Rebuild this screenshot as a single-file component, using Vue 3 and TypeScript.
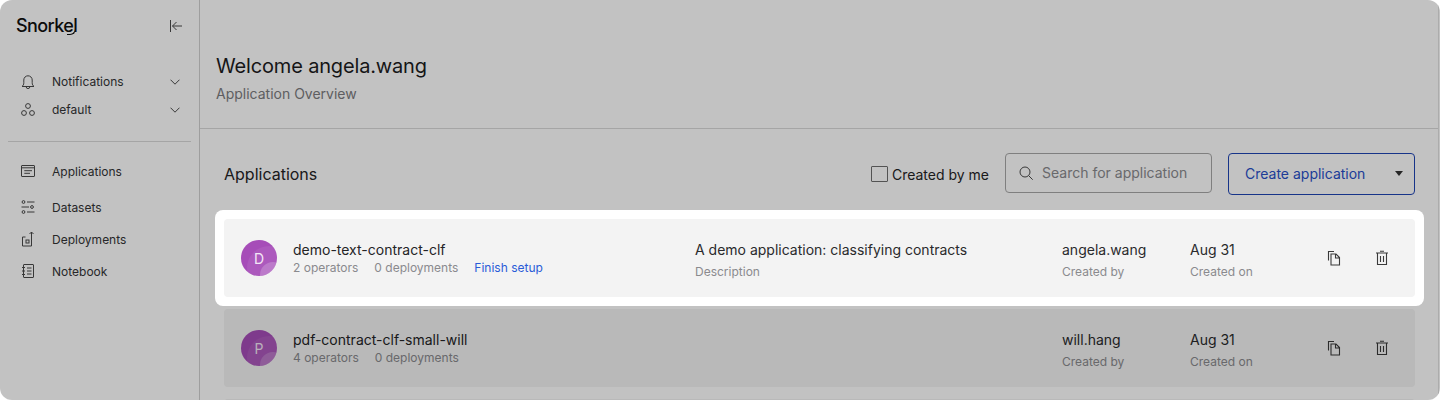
<script setup lang="ts">
interface AppRow {
  name: string;
  initial: string;
  operators: number;
  deployments: number;
  finishSetup?: boolean;
  description?: string;
  owner: string;
  created: string;
}

const topNav = ["Notifications", "default"];

const rows: AppRow[] = [
  {
    name: "demo-text-contract-clf",
    initial: "D",
    operators: 2,
    deployments: 0,
    finishSetup: true,
    description: "A demo application: classifying contracts",
    owner: "angela.wang",
    created: "Aug 31",
  },
  {
    name: "pdf-contract-clf-small-will",
    initial: "P",
    operators: 4,
    deployments: 0,
    owner: "will.hang",
    created: "Aug 31",
  },
];
</script>

<template>
  <div class="shell">
    <aside class="side">
      <div class="side__top">
        <div class="logo">Snorke<span class="logo__l">l</span></div>
        <svg class="collapse" width="16" height="16" viewBox="0 0 16 16" fill="none" stroke="#4a4a4a" stroke-width="1">
          <path d="M3.500 2v12M15 8H5.500M9.500 4l-4 4 4 4" />
        </svg>
      </div>

      <nav class="side__group side__group--top">
        <div v-for="(item, i) in topNav" :key="item" class="nav nav--top">
          <svg v-if="i === 0" class="nav__icon" width="16" height="16" viewBox="0 0 16 16" fill="none" stroke="#4a4a4a">
            <path d="M2 12.500c1.300-1 1.800-2 1.800-3.800V6a4.200 4.200 0 0 1 8.400 0v2.700c0 1.800.5 2.800 1.800 3.800z" />
            <path d="M6.200 12.800a1.800 1.800 0 0 0 3.600 0" />
          </svg>
          <svg v-else class="nav__icon" width="16" height="16" viewBox="0 0 16 16" fill="none" stroke="#4a4a4a">
            <circle cx="8" cy="4" r="2.400" />
            <circle cx="4" cy="11" r="2.400" />
            <circle cx="12" cy="11" r="2.400" />
          </svg>
          <span class="nav__label">{{ item }}</span>
          <svg class="nav__chevron" width="10" height="6" viewBox="0 0 10 6" fill="none" stroke="#4a4a4a">
            <path d="M.5.700 5 5.200 9.500.7" />
          </svg>
        </div>
      </nav>

      <div class="side__rule"></div>

      <nav class="side__group">
        <div class="nav nav--apps">
          <svg class="nav__icon" width="16" height="16" viewBox="0 0 16 16" fill="none" stroke="#4a4a4a">
            <rect x="1.500" y="2.500" width="13" height="11" rx=".5" />
            <path d="M1.500 4.800h13M4.300 7.700H12M4.300 10.300H10" />
          </svg>
          <span class="nav__label">Applications</span>
        </div>
        <div class="nav nav--datasets">
          <svg class="nav__icon" width="16" height="16" viewBox="0 0 16 16" fill="none" stroke="#4a4a4a">
            <circle cx="3.500" cy="3" r="1.400" />
            <circle cx="12" cy="8" r="1.400" />
            <circle cx="3.500" cy="13" r="1.400" />
            <path d="M7 3h7.500M1.500 8H9M7 13h7.500" />
          </svg>
          <span class="nav__label">Datasets</span>
        </div>
        <div class="nav nav--deploy">
          <svg class="nav__icon" width="16" height="16" viewBox="0 0 16 16" fill="none" stroke="#4a4a4a">
            <path d="M5.500 6h-3v9h9V1M9.500 3l2-2 2 2" />
            <rect x="6" y="9" width="3" height="3" />
          </svg>
          <span class="nav__label">Deployments</span>
        </div>
        <div class="nav">
          <svg class="nav__icon" width="16" height="16" viewBox="0 0 16 16" fill="none" stroke="#4a4a4a">
            <rect x="3.500" y="1.500" width="10" height="13" rx=".5" />
            <path d="M2 4.500h3M2 8h3M2 11.500h3M7 5h4.500M7 8h4.500M7 11h4.500" />
          </svg>
          <span class="nav__label">Notebook</span>
        </div>
      </nav>
    </aside>

    <main class="main">
      <header class="head">
        <h1 class="head__title">Welcome angela.wang</h1>
        <p class="head__sub">Application Overview</p>
      </header>

      <section class="apps">
        <div class="toolbar">
          <h2 class="toolbar__title">Applications</h2>
          <label class="check"><span class="check__box"></span>Created by me</label>
          <div class="search">
            <svg width="16" height="16" viewBox="0 0 16 16" fill="none" stroke="#4a4a4a">
              <circle cx="7" cy="7" r="5" />
              <path d="m10.700 10.700 4 4" />
            </svg>
            <span>Search for application</span>
          </div>
          <button class="create" type="button">
            <span>Create application</span>
            <span class="create__caret"></span>
          </button>
        </div>

        <div class="list">
          <div v-for="(row, i) in rows" :key="row.name" :class="{ spotlight: i === 0 }">
            <article class="row">
              <div class="avatar">{{ row.initial }}</div>
              <div class="row__name">
                <div class="row__title">{{ row.name }}</div>
                <div class="row__meta">
                  <span>{{ row.operators }} operators</span>
                  <span>{{ row.deployments }} deployments</span>
                  <a v-if="row.finishSetup" class="row__link">Finish setup</a>
                </div>
              </div>
              <div class="cell">
                <template v-if="row.description">
                  <div class="cell__value">{{ row.description }}</div>
                  <div class="cell__label">Description</div>
                </template>
              </div>
              <div class="cell">
                <div class="cell__value">{{ row.owner }}</div>
                <div class="cell__label">Created by</div>
              </div>
              <div class="cell">
                <div class="cell__value">{{ row.created }}</div>
                <div class="cell__label">Created on</div>
              </div>
              <div class="row__actions">
                <svg width="16" height="16" viewBox="0 0 16 16" fill="none" stroke="#3a3a3a" stroke-width="1.100">
                  <path d="M2.500 10.500V1.500H8" />
                  <path d="M5 4h5l3.500 3.500V15H5zM9.500 4v4h4" />
                </svg>
                <svg width="16" height="16" viewBox="0 0 16 16" fill="none" stroke="#3a3a3a" stroke-width="1.100">
                  <path d="M2 3h12M6 1.200h4M3.500 3v11.500h9V3M6.500 6v6M9.500 6v6" />
                </svg>
              </div>
            </article>
          </div>
          <div class="row row--next"></div>
        </div>
      </section>
    </main>
  </div>
</template>

<style>
html,
body {
  margin: 0;
  background: #fff;
}
</style>

<style scoped>
.shell {
  display: flex;
  height: 400px;
  width: 1440px;
  overflow: hidden;
  border-radius: 12px;
  background: #fff;
  box-sizing: border-box;
  padding-right: 1px;
  font-family: Inter, "Noto Sans", sans-serif;
  color: #242426;
}

.side {
  width: 200px;
  flex: none;
  box-sizing: border-box;
  border-right: 1px solid #d0d0d0;
  padding: 0 8px;
}

.side__top {
  display: flex;
  align-items: center;
  justify-content: space-between;
  height: 52px;
  padding: 0 8px;
}

.logo {
  font-size: 18px;
  line-height: 20px;
  font-weight: 500;
  letter-spacing: -0.6px;
  color: #111;
}

.logo__l {
  position: relative;
  display: inline-block;
}

.logo__l::after {
  content: "";
  position: absolute;
  right: 1px;
  bottom: 1px;
  width: 8px;
  height: 6px;
  border-right: 1.500px solid #111;
  border-bottom: 1.500px solid #111;
  border-bottom-right-radius: 6px;
}

.side__group--top {
  padding-top: 16px;
  padding-bottom: 17px;
  border-bottom: 1px solid #d9d9d9;
}

.side__group {
  display: flex;
  flex-direction: column;
}

.side__rule {
  height: 15px;
}

.nav {
  display: flex;
  align-items: center;
  height: 28px;
  padding: 0 4px 0 12px;
  font-size: 12px;
  color: #343436;
}

.nav--top {
  height: 28px;
  padding-bottom: 1px;
  box-sizing: border-box;
}

.nav--apps {
  margin-bottom: 8px;
}

.nav--datasets,
.nav--deploy {
  margin-bottom: 4px;
}

.nav__icon {
  flex: none;
  margin-right: 16px;
}

.nav__label {
  flex: 1;
}

.nav__chevron {
  margin-right: 7px;
}

.main {
  flex: 1;
  min-width: 0;
  border-right: 1px solid #e2e2e2;
}

.head {
  height: 129px;
  box-sizing: border-box;
  border-bottom: 1px solid #d9d9d9;
  padding: 53px 16px 0;
}

.head__title {
  margin: 0;
  font-size: 20px;
  line-height: 26px;
  font-weight: 400;
  letter-spacing: -0.16px;
  color: #1c1c1e;
}

.head__sub {
  margin: 6px 0 0;
  font-size: 14px;
  line-height: 18px;
  color: #7c7c80;
}

.apps {
  padding: 24px 23px 0 24px;
}

.toolbar {
  display: flex;
  align-items: center;
  height: 42px;
  margin-bottom: 24px;
}

.toolbar__title {
  margin: 0 auto 0 0;
  font-size: 16px;
  font-weight: 400;
}

.check {
  display: flex;
  align-items: center;
  gap: 4px;
  font-size: 14px;
  margin-right: 16px;
}

.check__box {
  width: 17px;
  height: 16px;
  box-sizing: border-box;
  border: 1px solid #6e6e6e;
  border-radius: 1px;
}

.search {
  display: flex;
  align-items: center;
  gap: 8px;
  align-self: flex-start;
  width: 207px;
  height: 40px;
  box-sizing: border-box;
  padding: 0 12px 1px;
  margin-right: 16px;
  border: 1px solid #a8a8a8;
  border-radius: 4px;
  font-size: 14px;
  color: #8a8a8e;
}

.create {
  display: flex;
  align-items: center;
  justify-content: space-between;
  width: 187px;
  height: 42px;
  box-sizing: border-box;
  padding: 0 11px 1px 16px;
  border: 1px solid #1f45b4;
  border-radius: 4px;
  background: none;
  font: inherit;
  font-size: 14px;
  color: #2850c8;
}

.create__caret {
  width: 0;
  height: 0;
  border-left: 4px solid transparent;
  border-right: 4px solid transparent;
  border-top: 5px solid #333;
}

.list {
  display: flex;
  flex-direction: column;
  gap: 12px;
}

.spotlight {
  position: relative;
  z-index: 1;
  margin: -9px;
  padding: 9px;
  background: #fff;
  border-radius: 8px;
  box-shadow: 0 0 0 2000px rgba(0, 0, 0, 0.24);
}

.row {
  display: grid;
  grid-template-columns: 36px 418px 367px 128px 1fr 88px;
  align-items: center;
  height: 78px;
  box-sizing: border-box;
  padding: 0 17px;
  background: #f3f3f3;
  border-radius: 4px;
}

.row--next {
  display: block;
}

.avatar {
  position: relative;
  overflow: hidden;
  display: flex;
  align-items: center;
  justify-content: center;
  width: 36px;
  height: 36px;
  border-radius: 50%;
  background: #a64db8;
  color: #f3e6f6;
  font-size: 14px;
}

.avatar::before {
  content: "";
  position: absolute;
  left: 6px;
  top: 6px;
  width: 44px;
  height: 44px;
  border-radius: 50%;
  background: rgba(255, 255, 255, 0.07);
}

.avatar::after {
  content: "";
  position: absolute;
  left: 19px;
  top: 22px;
  width: 26px;
  height: 26px;
  border-radius: 50%;
  background: rgba(255, 255, 255, 0.2);
}

.row__name {
  padding-left: 16px;
}

.row__title {
  font-size: 14px;
  line-height: 20px;
  color: #242426;
}

.row__meta {
  display: flex;
  gap: 16px;
  font-size: 12px;
  line-height: 16px;
  color: #8a8a8e;
}

.row__link {
  color: #2a5bd8;
}

.cell {
  padding-top: 4px;
}

.cell__value {
  font-size: 14px;
  line-height: 20px;
  color: #2a2a2c;
}

.cell__label {
  margin-top: 4px;
  font-size: 12px;
  line-height: 16px;
  color: #8a8a8e;
}

.row__actions {
  display: flex;
  justify-content: flex-end;
  gap: 32px;
  margin-right: 8px;
}
</style>
